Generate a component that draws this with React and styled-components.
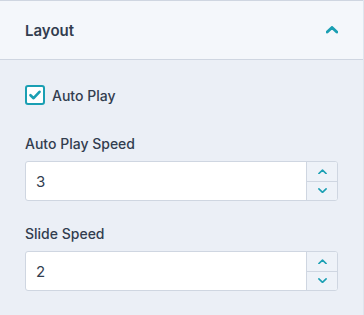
import React, { useState } from "react";
import styled, { createGlobalStyle } from "styled-components";

const GlobalStyle = createGlobalStyle`
  body {
    margin: 0;
    background: #ebeff6;
    font-family: Inter, "Noto Sans", sans-serif;
    color: #323d4f;
  }
`;

const Panel = styled.div`
  width: 364px;
  border-right: 1px solid #dfe5ee;
  min-height: 315px;
  box-sizing: border-box;
`;

const Header = styled.div`
  display: flex;
  align-items: center;
  justify-content: space-between;
  height: 58px;
  padding: 0 25px;
  background: #f4f7fb;
  border-top: 1px solid #cfd6e1;
  border-bottom: 1px solid #cfd6e1;

  h3 {
    margin: 0;
    font-size: 15px;
    font-weight: 600;
  }
`;

const Body = styled.div`
  display: flex;
  flex-direction: column;
  padding: 25px 25px 0 25px;
`;

const CheckRow = styled.label`
  display: flex;
  align-items: center;
  gap: 7px;
  font-size: 14px;
  font-weight: 500;
  margin-bottom: 30px;
  cursor: pointer;
`;

const Box = styled.span`
  display: flex;
  align-items: center;
  justify-content: center;
  width: 20px;
  height: 20px;
  box-sizing: border-box;
  border: 2px solid #1a9fb3;
  border-radius: 3px;
  background: #fff;
`;

const Field = styled.div`
  display: flex;
  flex-direction: column;
  gap: 8px;
  margin-bottom: 24px;
`;

const Label = styled.div`
  font-size: 14px;
  font-weight: 500;
  line-height: 18px;
`;

const NumberBox = styled.div`
  display: flex;
  height: 40px;
  box-sizing: border-box;
  border: 1px solid #cfd6e1;
  border-radius: 3px;
  background: #fff;
  overflow: hidden;
`;

const Value = styled.input`
  flex: 1;
  border: none;
  outline: none;
  padding: 0 10px;
  font: inherit;
  font-size: 15px;
  color: #323d4f;
  background: transparent;
  min-width: 0;
`;

const Spin = styled.div`
  display: flex;
  flex-direction: column;
  width: 30px;
  border-left: 1px solid #cfd6e1;
  background: #eef2f8;
`;

const SpinButton = styled.button`
  flex: 1;
  display: flex;
  align-items: center;
  justify-content: center;
  padding: 0;
  border: none;
  background: transparent;
  border-top: ${p => (p.$bottom ? "1px solid #cfd6e1" : "none")};
  cursor: pointer;
`;

const Chevron = ({ up, size = 9, width = 1.8 }) => (
  <svg width={size} height={size * 0.6} viewBox="0 0 10 6" fill="none">
    <path
      d={up ? "M1 5L5 1.2L9 5" : "M1 1L5 4.8L9 1"}
      stroke="#1a9fb3"
      strokeWidth={width}
      strokeLinecap="round"
      strokeLinejoin="round"
    />
  </svg>
);

const NumberField = ({ label, value, onChange }) => (
  <Field>
    <Label>{label}</Label>
    <NumberBox>
      <Value value={value} onChange={e => onChange(e.target.value)} />
      <Spin>
        <SpinButton onClick={() => onChange(Number(value) + 1)}>
          <Chevron up />
        </SpinButton>
        <SpinButton $bottom onClick={() => onChange(Number(value) - 1)}>
          <Chevron />
        </SpinButton>
      </Spin>
    </NumberBox>
  </Field>
);

export default function App() {
  const [autoPlay, setAutoPlay] = useState(true);
  const [speed, setSpeed] = useState(3);
  const [slide, setSlide] = useState(2);

  return (
    <Panel>
      <GlobalStyle />
      <Header>
        <h3>Layout</h3>
        <Chevron up size={12} width={2.4} />
      </Header>
      <Body>
        <CheckRow onClick={() => setAutoPlay(!autoPlay)}>
          <Box>
            {autoPlay && (
              <svg width="12" height="10" viewBox="0 0 12 10" fill="none">
                <path d="M1.5 5.2L4.6 8.2L10.5 1.8" stroke="#1a9fb3" strokeWidth="2.6" strokeLinecap="round" strokeLinejoin="round" />
              </svg>
            )}
          </Box>
          Auto Play
        </CheckRow>
        <NumberField label="Auto Play Speed" value={speed} onChange={setSpeed} />
        <NumberField label="Slide Speed" value={slide} onChange={setSlide} />
      </Body>
    </Panel>
  );
}
